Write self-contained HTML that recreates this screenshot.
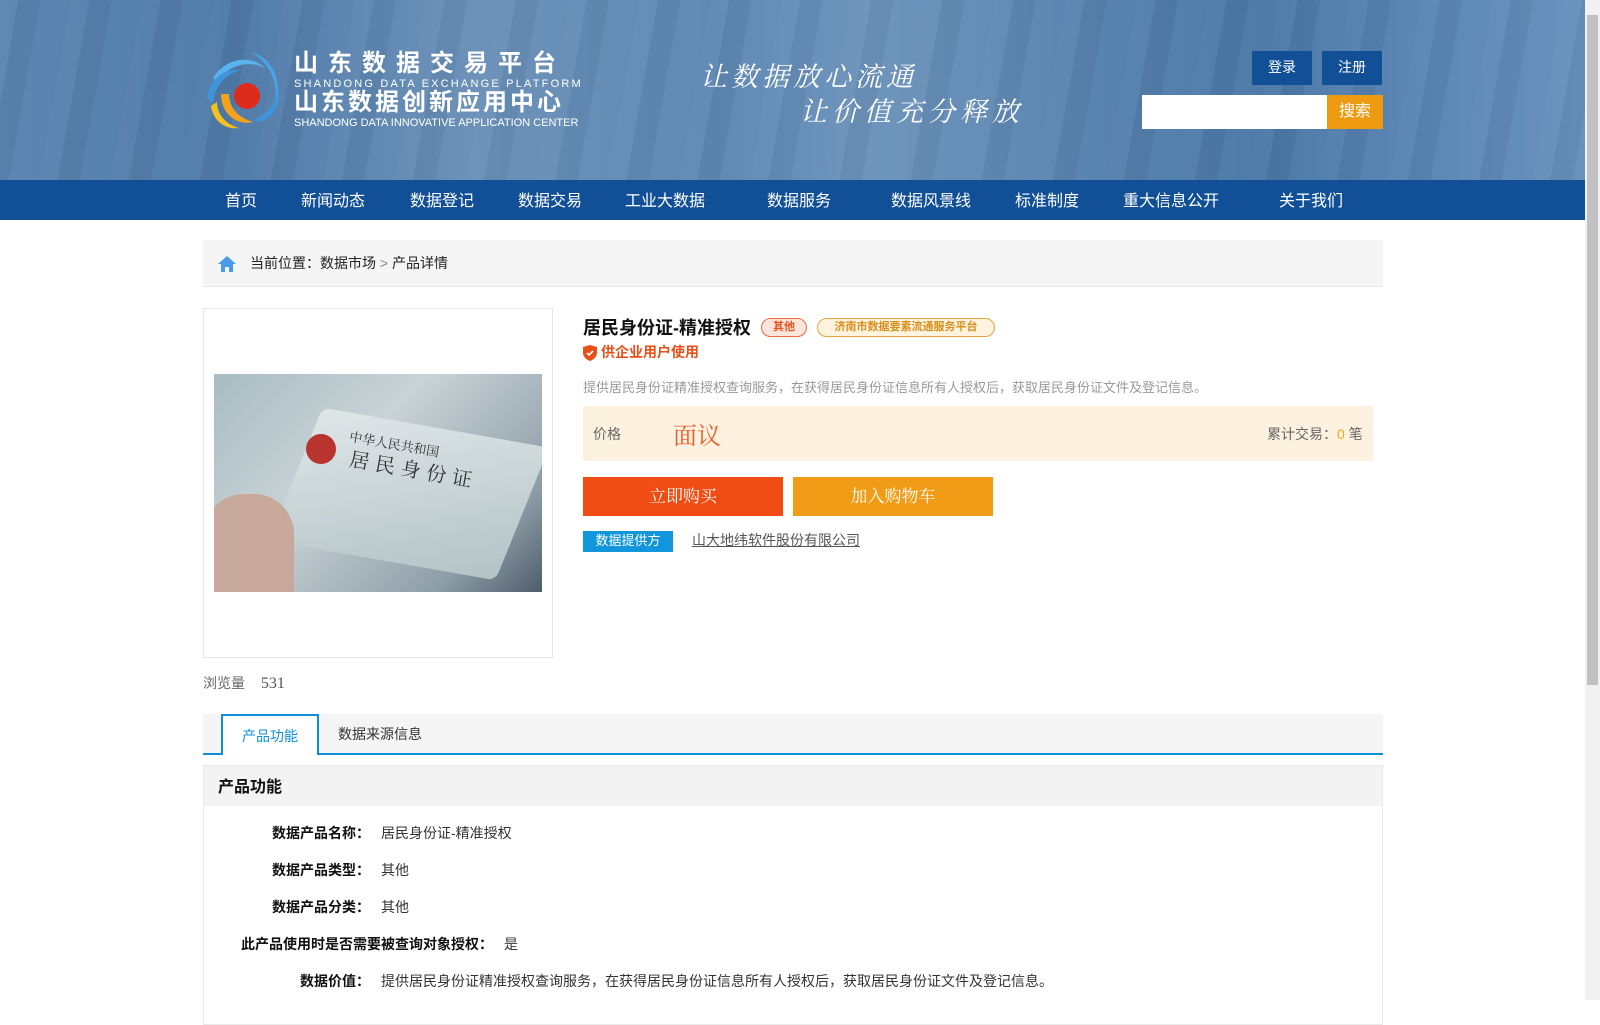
<!DOCTYPE html>
<html><head><meta charset="utf-8"><style>
*{margin:0;padding:0;box-sizing:border-box}
body{width:1600px;height:1000px;overflow:hidden;background:#fff;font-family:"Liberation Sans","Noto Sans CJK SC",sans-serif;color:#333;position:relative}
.abs{position:absolute}
#hdr{left:0;top:0;width:1585px;height:180px;background:linear-gradient(90deg,#5a84b0 0%,#4f7aa8 15%,#6a90b8 30%,#5d87b3 45%,#6c93bb 55%,#5581ad 70%,#4c78a6 80%,#5a86b4 90%,#6690bc 100%)}
#hdr:before{content:"";position:absolute;inset:0;background:repeating-linear-gradient(100deg,rgba(255,255,255,.03) 0 18px,rgba(0,0,0,.04) 18px 40px,rgba(255,255,255,.02) 40px 70px)}
#nav{left:0;top:180px;width:1585px;height:40px;background:#114f96}
#nav span{position:absolute;top:7px;color:#fff;font-size:16px;transform:translateX(-50%);white-space:nowrap}
#sb{left:1585px;top:0;width:15px;height:1000px;background:#f1f1f1}
.btn{color:#fff;font-size:14px;text-align:center}
.row{position:relative;height:37px}
.row b{position:absolute;right:133px;color:#111;white-space:nowrap}
.row span{position:absolute;left:178px;white-space:nowrap}
</style></head><body>
<div id="hdr" class="abs"></div>
<svg class="abs" style="left:203px;top:48px" width="82" height="84" viewBox="0 0 82 84">
<path d="M48 4 C72 10 82 40 70 62 C78 38 68 16 48 4Z" fill="#4aa3e6"/>
<path d="M10 30 C22 10 48 6 62 20 C46 12 26 16 14 34Z" fill="#5ab2ee"/>
<path d="M4 50 C6 30 22 20 38 22 C24 26 12 36 10 54Z" fill="#3e95dc"/>
<path d="M8 58 C10 74 24 82 36 80 C22 76 14 66 14 54Z" fill="#f4c21b"/>
<path d="M18 46 C18 66 34 78 50 74 C36 70 26 60 26 46Z" fill="#f4a21b"/>
<path d="M56 74 C70 70 78 56 76 42 C72 58 62 68 50 72Z" fill="#3e95dc"/>
<circle cx="44" cy="48" r="13" fill="#dd2a1b"/>
</svg>
<div class="abs" style="left:294px;top:51px;color:#fff;font-size:24px;font-weight:bold;letter-spacing:10px;line-height:26px">山东数据交易平台</div>
<div class="abs" style="left:294px;top:78px;color:#fff;font-size:11px;letter-spacing:2.2px;line-height:12px">SHANDONG DATA EXCHANGE PLATFORM</div>
<div class="abs" style="left:294px;top:90px;color:#fff;font-size:24px;font-weight:bold;letter-spacing:3px;line-height:26px">山东数据创新应用中心</div>
<div class="abs" style="left:294px;top:117px;color:#fff;font-size:11px;line-height:12px;letter-spacing:0">SHANDONG DATA INNOVATIVE APPLICATION CENTER</div>
<div class="abs" style="left:700px;top:55px;color:#fff;font-size:27px;letter-spacing:4px;font-family:'Liberation Serif','Noto Serif CJK SC',serif;font-style:italic">让数据放心流通</div>
<div class="abs" style="left:800px;top:90px;color:#fff;font-size:27px;letter-spacing:5px;font-family:'Liberation Serif','Noto Serif CJK SC',serif;font-style:italic">让价值充分释放</div>
<div class="abs btn" style="left:1252px;top:51px;width:60px;height:34px;line-height:32px;background:#114f96">登录</div>
<div class="abs btn" style="left:1322px;top:51px;width:60px;height:34px;line-height:32px;background:#114f96">注册</div>
<div class="abs" style="left:1142px;top:95px;width:185px;height:34px;background:#fff"></div>
<div class="abs btn" style="left:1327px;top:95px;width:56px;height:34px;line-height:34px;background:#ef9b12;font-size:16px">搜索</div>
<div id="nav" class="abs">
<span style="left:241px">首页</span><span style="left:333px">新闻动态</span><span style="left:442px">数据登记</span><span style="left:550px">数据交易</span><span style="left:665px">工业大数据</span><span style="left:799px">数据服务</span><span style="left:931px">数据风景线</span><span style="left:1047px">标准制度</span><span style="left:1171px">重大信息公开</span><span style="left:1311px">关于我们</span>
</div>
<div id="sb" class="abs"><div style="position:absolute;left:2px;top:15px;width:11px;height:670px;background:#c1c1c1"></div></div>
<div class="abs" style="left:203px;top:240px;width:1180px;height:47px;background:#f5f5f5;border-bottom:1px solid #e8e8e8"></div>
<svg class="abs" style="left:217px;top:255px" width="20" height="18" viewBox="0 0 20 18"><path d="M10 1 L1 9 H4 V17 H8 V12 H12 V17 H16 V9 H19 Z" fill="#4a9be8"/></svg>
<div class="abs" style="left:250px;top:253px;font-size:14px;color:#222">当前位置：数据市场 <span style="color:#888">&gt;</span> 产品详情</div>
<div class="abs" style="left:203px;top:308px;width:350px;height:350px;border:1px solid #e6e6e6"></div>
<div class="abs" style="left:214px;top:374px;width:328px;height:218px;background:linear-gradient(135deg,#a9bcc3 0%,#c9d3d6 40%,#8e9ea8 80%,#4e5d6a 100%);overflow:hidden">
<div style="position:absolute;left:80px;top:50px;width:230px;height:140px;background:linear-gradient(160deg,#dfe6e8,#b3c3c6);border-radius:8px;transform:rotate(10deg) skewX(-12deg)"></div>
<div style="position:absolute;left:92px;top:60px;width:30px;height:30px;border-radius:50%;background:#b8342e"></div>
<div style="position:absolute;left:135px;top:60px;font-size:13px;color:#333;transform:rotate(10deg);font-family:'Noto Serif CJK SC',serif">中华人民共和国</div>
<div style="position:absolute;left:135px;top:80px;font-size:20px;color:#333;letter-spacing:6px;transform:rotate(10deg);font-family:'Noto Serif CJK SC',serif">居民身份证</div>
<div style="position:absolute;left:-10px;top:120px;width:90px;height:110px;background:#c7a89a;border-radius:40px 40px 0 0"></div>
</div>
<div class="abs" style="left:203px;top:673px;font-size:14px;color:#666">浏览量 <span style="margin-left:12px;font-size:16px;font-family:'Liberation Serif',serif;color:#555">531</span></div>
<div class="abs" style="left:583px;top:314px;font-size:18px;font-weight:bold;color:#111">居民身份证-精准授权</div>
<div class="abs" style="left:761px;top:318px;width:46px;height:19px;border:1px solid #f06a3c;border-radius:10px;background:#fde5dc;color:#e8501a;font-size:11px;font-weight:bold;text-align:center;line-height:16px">其他</div>
<div class="abs" style="left:817px;top:318px;width:178px;height:19px;border:1px solid #e8a33a;border-radius:10px;background:#fdf3df;color:#d88f1a;font-size:11px;font-weight:bold;text-align:center;line-height:16px">济南市数据要素流通服务平台</div>
<svg class="abs" style="left:583px;top:345px" width="14" height="16" viewBox="0 0 14 16"><path d="M7 0 L14 2 V8 C14 12 10 15 7 16 C4 15 0 12 0 8 V2Z" fill="#e8501a"/><path d="M4 8 L6 10 L10 6" stroke="#fff" stroke-width="1.6" fill="none"/></svg>
<div class="abs" style="left:601px;top:342px;font-size:14px;font-weight:bold;color:#e8501a">供企业用户使用</div>
<div class="abs" style="left:583px;top:377px;font-size:13px;color:#999">提供居民身份证精准授权查询服务，在获得居民身份证信息所有人授权后，获取居民身份证文件及登记信息。</div>
<div class="abs" style="left:583px;top:406px;width:790px;height:55px;background:#fdf2df"></div>
<div class="abs" style="left:593px;top:424px;font-size:14px;color:#666">价格</div>
<div class="abs" style="left:673px;top:416px;font-size:24px;color:#f05a28;font-family:'Liberation Serif','Noto Serif CJK SC',serif">面议</div>
<div class="abs" style="left:1267px;top:424px;font-size:14px;color:#666">累计交易：<span style="color:#f5a623">0</span> 笔</div>
<div class="abs btn" style="left:583px;top:477px;width:200px;height:39px;line-height:39px;background:#f04d14;font-size:17px;font-family:'Liberation Serif','Noto Serif CJK SC',serif">立即购买</div>
<div class="abs btn" style="left:793px;top:477px;width:200px;height:39px;line-height:39px;background:#f09c16;font-size:17px;font-family:'Liberation Serif','Noto Serif CJK SC',serif">加入购物车</div>
<div class="abs btn" style="left:583px;top:531px;width:90px;height:21px;line-height:19px;background:#1296db;font-size:13px">数据提供方</div>
<div class="abs" style="left:692px;top:530px;font-size:14px;color:#555;text-decoration:underline">山大地纬软件股份有限公司</div>
<div class="abs" style="left:203px;top:714px;width:1180px;height:41px;background:#f5f5f5;border-bottom:2px solid #0e90d8"></div>
<div class="abs" style="left:221px;top:714px;width:98px;height:41px;background:#fff;border:2px solid #0e90d8;border-bottom:none;color:#0e90d8;font-size:14px;text-align:center;line-height:40px">产品功能</div>
<div class="abs" style="left:338px;top:724px;font-size:14px;color:#333">数据来源信息</div>
<div class="abs" style="left:203px;top:765px;width:1180px;height:260px;border:1px solid #eaeaea"></div>
<div class="abs" style="left:204px;top:766px;width:1178px;height:40px;background:#f3f3f3"></div>
<div class="abs" style="left:218px;top:773px;font-size:16px;font-weight:bold;color:#111">产品功能</div>
<div class="abs" style="left:203px;top:815px;width:300px;font-size:14px;line-height:37px">
<div class="row"><b>数据产品名称：</b><span>居民身份证-精准授权</span></div>
<div class="row"><b>数据产品类型：</b><span>其他</span></div>
<div class="row"><b>数据产品分类：</b><span>其他</span></div>
<div class="row"><b style="right:auto;left:38px">此产品使用时是否需要被查询对象授权：</b><span style="left:301px">是</span></div>
<div class="row"><b>数据价值：</b><span>提供居民身份证精准授权查询服务，在获得居民身份证信息所有人授权后，获取居民身份证文件及登记信息。</span></div>
</div>
</body></html>
